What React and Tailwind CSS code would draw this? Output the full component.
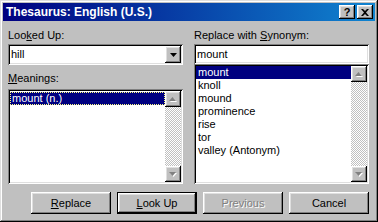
import React from "react";

const sunken =
  "shadow-[inset_1px_1px_0_#808080,inset_-1px_-1px_0_#ffffff,inset_2px_2px_0_#000000,inset_-2px_-2px_0_#dfdfdf]";
const raised =
  "shadow-[inset_-1px_-1px_0_#000000,inset_1px_1px_0_#ffffff,inset_-2px_-2px_0_#808080,inset_2px_2px_0_#dfdfdf]";
const checker =
  "bg-[repeating-conic-gradient(#c0c0c0_0_25%,#ffffff_0_50%)] bg-[length:2px_2px]";

function Tri({ dir = "down", disabled = false }) {
  const pts = dir === "down" ? "0,0 7,0 3.5,4" : "3.5,0 7,4 0,4";
  if (disabled) {
    return (
      <svg width="8" height="5" viewBox="0 0 8 5" className="block">
        <polygon points={dir === "down" ? "1,1 8,1 4.5,5" : "4.5,1 8,5 1,5"} fill="#ffffff" />
        <polygon points={pts} fill="#808080" />
      </svg>
    );
  }
  return (
    <svg width="7" height="4" viewBox="0 0 7 4" className="block">
      <polygon points={pts} fill="#000000" />
    </svg>
  );
}

function ArrowBtn({ dir, disabled }) {
  return (
    <div className={`w-[16px] h-[16px] bg-[#c0c0c0] ${raised} flex items-center justify-center`}>
      <Tri dir={dir} disabled={disabled} />
    </div>
  );
}

function ScrollBar() {
  return (
    <div className={`w-[16px] h-full flex flex-col ${checker}`}>
      <ArrowBtn dir="up" disabled />
      <div className="flex-1" />
      <ArrowBtn dir="down" disabled />
    </div>
  );
}

function Btn({ children, isDefault, disabled }) {
  const inner = (
    <div
      className={`h-full w-full bg-[#c0c0c0] ${raised} flex items-center justify-center text-[11px] ${
        disabled ? "text-[#808080] [text-shadow:1px_1px_0_#ffffff]" : "text-black"
      }`}
    >
      {children}
    </div>
  );
  return (
    <div className={`w-[80px] h-[22px] ${isDefault ? "border border-black" : ""}`}>{inner}</div>
  );
}

export default function App() {
  const synonyms = ["knoll", "mound", "prominence", "rise", "tor", "valley (Antonym)"];
  return (
    <div
      className={`w-[378px] h-[222px] bg-[#c0c0c0] p-[3px] shadow-[inset_-1px_-1px_0_#000000,inset_1px_1px_0_#dfdfdf,inset_-2px_-2px_0_#808080,inset_2px_2px_0_#ffffff] font-['Liberation_Sans',Arial,sans-serif] flex flex-col`}
    >
      {/* title bar */}
      <div className="h-[18px] bg-[linear-gradient(to_right,#000080,#1084d0)] flex items-center pl-[3px] pr-[2px]">
        <div className="text-white font-bold text-[12px] leading-[14px] flex-1">
          Thesaurus: English (U.S.)
        </div>
        <div className={`w-[16px] h-[14px] bg-[#c0c0c0] ${raised} flex items-center justify-center text-[11px] font-bold leading-none text-black`}>
          ?
        </div>
        <div className={`ml-[2px] w-[16px] h-[14px] bg-[#c0c0c0] ${raised} flex items-center justify-center`}>
          <svg width="8" height="7" viewBox="0 0 8 7" className="block">
            <path d="M0 0h2l2 2 2-2h2L5 3.5 8 7H6L4 5 2 7H0l3-3.5z" fill="#000" />
          </svg>
        </div>
      </div>

      {/* body */}
      <div className="flex-1 flex flex-col px-[5px] pt-[8px] text-[11px] text-black">
        <div className="flex gap-[11px]">
          {/* left */}
          <div className="w-[175px] flex flex-col">
            <div className="h-[13px] leading-[13px]">
              Loo<span className="underline">k</span>ed Up:
            </div>
            <div className={`mt-[2px] h-[21px] bg-white ${sunken} p-[2px] flex`}>
              <div className="flex-1 pl-[1px] leading-[17px]">hill</div>
              <div className={`w-[16px] h-[17px] bg-[#c0c0c0] ${raised} flex items-center justify-center`}>
                <Tri dir="down" />
              </div>
            </div>
            <div className="mt-[7px] h-[13px] leading-[13px]">
              <span className="underline">M</span>eanings:
            </div>
            <div className={`mt-[4px] h-[95px] bg-white ${sunken} p-[2px] flex`}>
              <div className="flex-1 pt-[1px]">
                <div className="h-[13px] leading-[11px] bg-[#000080] text-white border border-dotted border-[#ffff80] pl-[1px]">
                  mount (n.)
                </div>
              </div>
              <ScrollBar />
            </div>
          </div>

          {/* right */}
          <div className="w-[175px] flex flex-col">
            <div className="h-[13px] leading-[13px]">
              Replace with <span className="underline">S</span>ynonym:
            </div>
            <div className={`mt-[2px] h-[20px] bg-white ${sunken} p-[2px] pl-[3px] leading-[16px]`}>
              mount
            </div>
            <div className={`h-[120px] bg-white ${sunken} p-[2px] flex`}>
              <div className="flex-1">
                <div className="h-[13px] leading-[13px] bg-[#000080] text-white pl-[2px]">mount</div>
                {synonyms.map((s) => (
                  <div key={s} className="h-[13px] leading-[13px] pl-[2px]">
                    {s}
                  </div>
                ))}
              </div>
              <ScrollBar />
            </div>
          </div>
        </div>

        {/* buttons */}
        <div className="mt-[8px] flex justify-end gap-[6px] pr-[1px]">
          <Btn>
            <span className="underline">R</span>eplace
          </Btn>
          <Btn isDefault>
            <span className="underline">L</span>ook Up
          </Btn>
          <Btn disabled>Previous</Btn>
          <Btn>Cancel</Btn>
        </div>
      </div>
    </div>
  );
}
